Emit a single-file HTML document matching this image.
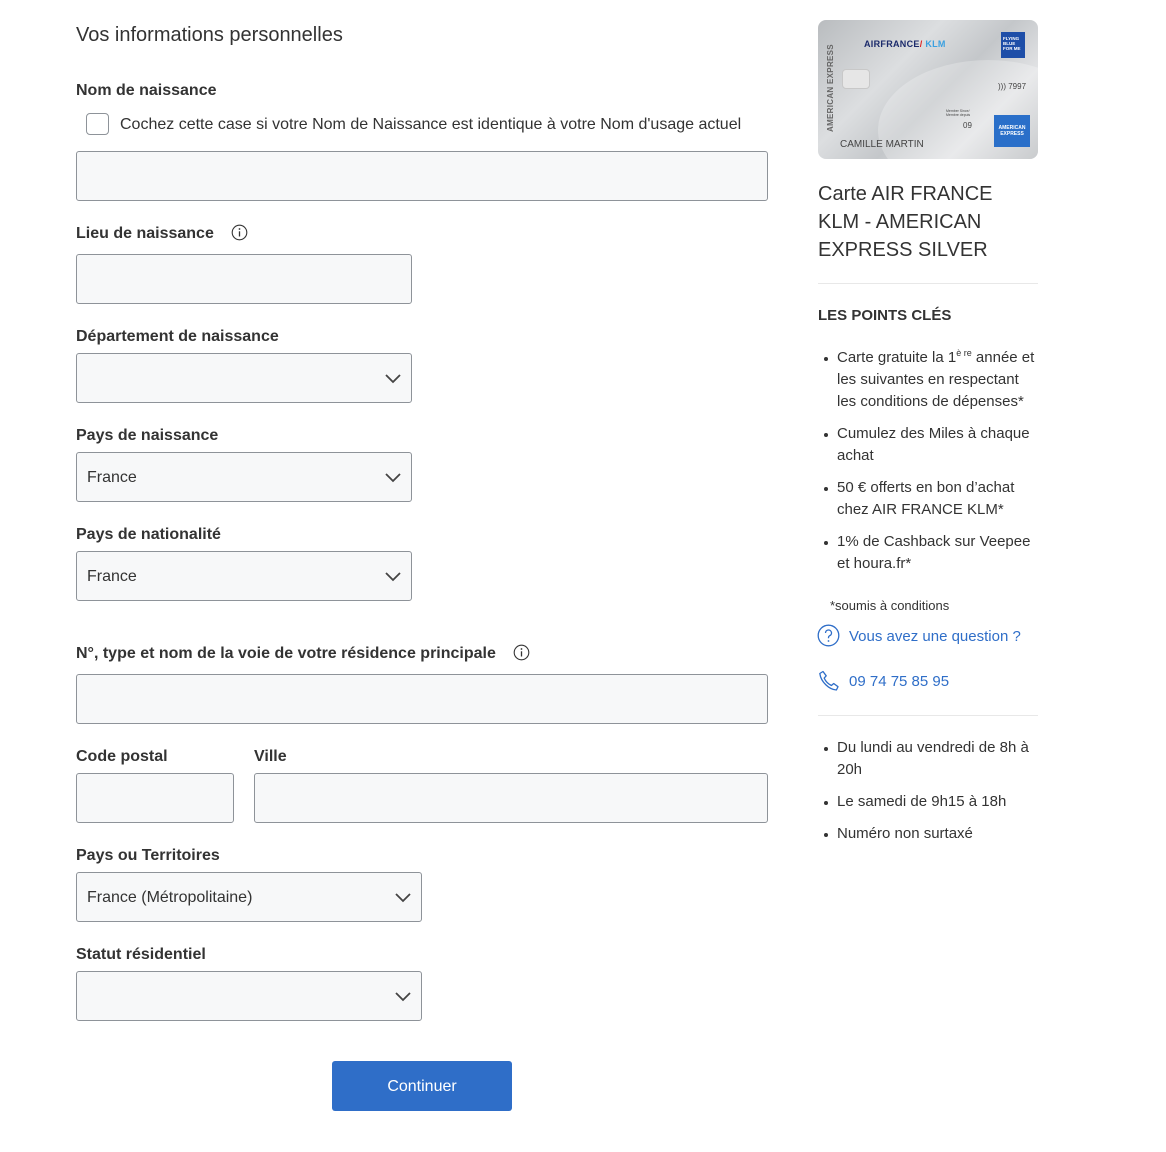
<!DOCTYPE html>
<html><head><meta charset="utf-8">
<style>
*{box-sizing:border-box;margin:0;padding:0}
html,body{width:1166px;height:1152px;background:#fff;font-family:"Liberation Sans",Arial,sans-serif;color:#333;overflow:hidden}
.a{position:absolute}
.lbl{position:absolute;font-weight:bold;font-size:16px;color:#333;line-height:20px}
.inp{position:absolute;background:#f7f8f9;border:1px solid #8e9399;border-radius:3px;height:50px}
.inp .v{position:absolute;left:10px;top:16px;font-size:16px;color:#333}
.inp svg{position:absolute;right:9px;top:18px}
.info{display:inline-block;vertical-align:middle}
.side{font-size:15px;line-height:22px;color:#333}
ul.b{list-style:none}
ul.b li{position:relative;padding-left:19px;margin-bottom:10px}
ul.b li:before{content:"";position:absolute;left:6px;top:10px;width:4px;height:4px;border-radius:50%;background:#333}
sup{font-size:9px;line-height:0;vertical-align:6px}
</style></head><body>

<div class="a" style="left:76px;top:24px;font-size:20px;color:#333">Vos informations personnelles</div>

<div class="lbl" style="left:76px;top:81px">Nom de naissance</div>
<div class="a" style="left:86px;top:113px;width:23px;height:22px;border:1px solid #8e9399;border-radius:4px;background:#fff"></div>
<div class="a" style="left:120px;top:116px;font-size:16px">Cochez cette case si votre Nom de Naissance est identique à votre Nom d'usage actuel</div>
<div class="inp" style="left:76px;top:151px;width:692px"></div>

<div class="lbl" style="left:76px;top:224px">Lieu de naissance
<svg class="info" style="margin-left:13px;margin-top:-3px" width="17" height="17" viewBox="0 0 17 17"><circle cx="8.5" cy="8.5" r="7.3" fill="none" stroke="#333" stroke-width="1.1"/><circle cx="8.5" cy="5" r="0.9" fill="#333"/><path d="M8.5 7.3v5.2" stroke="#333" stroke-width="1.3"/></svg></div>
<div class="inp" style="left:76px;top:254px;width:336px"></div>

<div class="lbl" style="left:76px;top:327px">Département de naissance</div>
<div class="inp" style="left:76px;top:353px;width:336px"><svg width="18" height="12" viewBox="0 0 18 12"><path d="M2 3l7 7 7-7" fill="none" stroke="#444" stroke-width="1.8"/></svg></div>

<div class="lbl" style="left:76px;top:426px">Pays de naissance</div>
<div class="inp" style="left:76px;top:452px;width:336px"><span class="v">France</span><svg width="18" height="12" viewBox="0 0 18 12"><path d="M2 3l7 7 7-7" fill="none" stroke="#444" stroke-width="1.8"/></svg></div>

<div class="lbl" style="left:76px;top:525px">Pays de nationalité</div>
<div class="inp" style="left:76px;top:551px;width:336px"><span class="v">France</span><svg width="18" height="12" viewBox="0 0 18 12"><path d="M2 3l7 7 7-7" fill="none" stroke="#444" stroke-width="1.8"/></svg></div>

<div class="lbl" style="left:76px;top:644px">N°, type et nom de la voie de votre résidence principale
<svg class="info" style="margin-left:13px;margin-top:-3px" width="17" height="17" viewBox="0 0 17 17"><circle cx="8.5" cy="8.5" r="7.3" fill="none" stroke="#333" stroke-width="1.1"/><circle cx="8.5" cy="5" r="0.9" fill="#333"/><path d="M8.5 7.3v5.2" stroke="#333" stroke-width="1.3"/></svg></div>
<div class="inp" style="left:76px;top:674px;width:692px"></div>

<div class="lbl" style="left:76px;top:747px">Code postal</div>
<div class="lbl" style="left:254px;top:747px">Ville</div>
<div class="inp" style="left:76px;top:773px;width:158px"></div>
<div class="inp" style="left:254px;top:773px;width:514px"></div>

<div class="lbl" style="left:76px;top:846px">Pays ou Territoires</div>
<div class="inp" style="left:76px;top:872px;width:346px"><span class="v">France (Métropolitaine)</span><svg width="18" height="12" viewBox="0 0 18 12"><path d="M2 3l7 7 7-7" fill="none" stroke="#444" stroke-width="1.8"/></svg></div>

<div class="lbl" style="left:76px;top:945px">Statut résidentiel</div>
<div class="inp" style="left:76px;top:971px;width:346px"><svg width="18" height="12" viewBox="0 0 18 12"><path d="M2 3l7 7 7-7" fill="none" stroke="#444" stroke-width="1.8"/></svg></div>

<div class="a" style="left:332px;top:1061px;width:180px;height:50px;background:#2f6ec8;border-radius:3px;color:#fff;font-size:16px;text-align:center;line-height:52px">Continuer</div>

<!-- Card -->
<div class="a" style="left:818px;top:20px;width:220px;height:139px;border-radius:8px;overflow:hidden;background:linear-gradient(135deg,#b9bcbf 0%,#dcdee0 35%,#c4c7ca 55%,#e2e3e5 75%,#b7babd 100%)">
  <div class="a" style="left:60px;top:40px;width:220px;height:140px;border-radius:50%;background:rgba(255,255,255,0.25)"></div>
  <div class="a" style="left:8px;top:112px;transform:rotate(-90deg);transform-origin:0 0;font-size:8px;font-weight:bold;color:#666;white-space:nowrap;letter-spacing:0.3px">AMERICAN EXPRESS</div>
  <div class="a" style="left:46px;top:19px;font-size:9px;font-weight:bold;color:#1b2a6b;letter-spacing:0.3px">AIRFRANCE<span style="color:#d22">/</span> <span style="color:#3aa0e0">KLM</span></div>
  <div class="a" style="left:183px;top:12px;width:24px;height:26px;background:#1e4ea8;color:#fff;font-size:4.5px;line-height:5px;padding:4px 2px;font-weight:bold">FLYING BLUE FOR ME</div>
  <div class="a" style="left:24px;top:49px;width:28px;height:20px;border-radius:4px;background:#e6e6e6;border:1px solid #c8c8c8"></div>
  <div class="a" style="left:180px;top:62px;font-size:8px;color:#444">))) 7997</div>
  <div class="a" style="left:128px;top:89px;font-size:3.5px;color:#444;line-height:4px">Member Since/<br>Membre depuis</div>
  <div class="a" style="left:145px;top:101px;font-size:8px;color:#444">09</div>
  <div class="a" style="left:176px;top:95px;width:36px;height:32px;background:#2a6fc9;color:#fff;font-size:5px;line-height:6px;padding-top:10px;text-align:center;font-weight:bold">AMERICAN<br>EXPRESS</div>
  <div class="a" style="left:22px;top:119px;font-size:10px;color:#444">CAMILLE MARTIN</div>
</div>

<div class="a side" style="left:818px;top:180px;font-size:20px;line-height:28px;width:220px">Carte AIR FRANCE KLM - AMERICAN EXPRESS SILVER</div>
<div class="a" style="left:818px;top:283px;width:220px;height:1px;background:#e8e8e8"></div>
<div class="a" style="left:818px;top:307px;font-size:15px;font-weight:bold;color:#333">LES POINTS CLÉS</div>

<ul class="a b side" style="left:818px;top:347px;width:219px">
<li>Carte gratuite la 1<sup>è re</sup> année et les suivantes en respectant les conditions de dépenses*</li>
<li>Cumulez des Miles à chaque achat</li>
<li>50 € offerts en bon d’achat chez AIR FRANCE KLM*</li>
<li>1% de Cashback sur Veepee et houra.fr*</li>
</ul>
<div class="a" style="left:830px;top:598px;font-size:13px;color:#333">*soumis à conditions</div>

<svg class="a" style="left:817px;top:624px" width="23" height="23" viewBox="0 0 23 23"><circle cx="11.5" cy="11.5" r="10.3" fill="none" stroke="#2f6ec8" stroke-width="1.3"/><path d="M8.5 9a3 3 0 1 1 4 2.8c-.8.4-1 .9-1 1.7v.8" fill="none" stroke="#2f6ec8" stroke-width="1.3"/><circle cx="11.5" cy="17" r="0.9" fill="#2f6ec8"/></svg>
<div class="a" style="left:849px;top:628px;font-size:15px;color:#2f6ec8">Vous avez une question ?</div>

<svg class="a" style="left:818px;top:670px" width="22" height="22" viewBox="0 0 22 22"><path d="M5 1.5l3.2 4.3-2 2.3c1.3 3 4 5.8 7.2 7.4l2.3-2 4.3 3.2-1.6 3.3C11 19.5 3 12 1.8 3.5z" fill="none" stroke="#2f6ec8" stroke-width="1.3" stroke-linejoin="round"/></svg>
<div class="a" style="left:849px;top:673px;font-size:15px;color:#2f6ec8">09 74 75 85 95</div>

<div class="a" style="left:818px;top:715px;width:220px;height:1px;background:#e8e8e8"></div>
<ul class="a b side" style="left:818px;top:737px;width:219px">
<li>Du lundi au vendredi de 8h à 20h</li>
<li>Le samedi de 9h15 à 18h</li>
<li>Numéro non surtaxé</li>
</ul>
</body></html>
